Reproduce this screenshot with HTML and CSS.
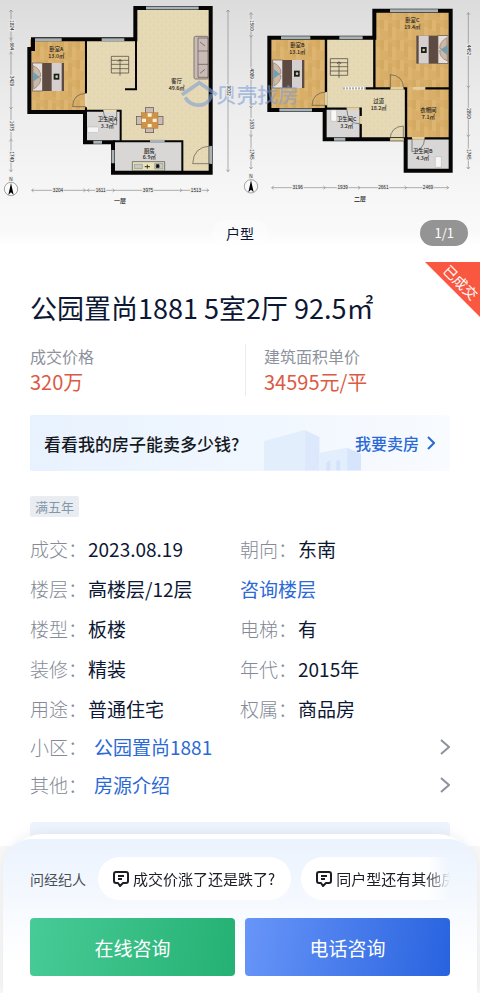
FILE: index.html
```html
<!DOCTYPE html>
<html lang="zh-CN">

<head>
    <meta charset="UTF-8">
    <meta name="viewport" content="width=device-width, initial-scale=1.0">
    <title>公园置尚1881</title>
    <link rel="stylesheet" href="styles.css">
</head>

<body>
    <header class="gallery">
        <svg class="floor-plan" viewBox="0 0 1440 630" role="img" aria-label="户型图">
            <defs>
                <pattern id="wood" width="48" height="60" patternUnits="userSpaceOnUse">
                    <rect width="48" height="60" fill="#d8ae68" />
                    <path d="M0 0h12v34H0zM24 20h12v40H24z" fill="#ddb571" />
                    <path d="M12 10h12v40H12zM36 0h12v26H36z" fill="#d4a961" />
                </pattern>
                <pattern id="stone" width="24" height="24" patternUnits="userSpaceOnUse">
                    <rect width="24" height="24" fill="#e6d9b5" />
                    <path d="M2 8l6-5M14 20l7-4M15 6l4 4M4 18l4 3" stroke="#dccb9f" stroke-width="2" />
                </pattern>
                <g id="bed">
                    <rect width="95" height="84" fill="#5d4b42" />
                    <rect width="30" height="84" fill="#e6dfdb" stroke="#6b5b52" stroke-width="2" />
                    <path d="M2 8q24 10 23 32q-10 4-23 2zM2 44q14-4 23 2q0 20-21 32z" fill="#cdb8a5" stroke="#8b776a" stroke-width="2" />
                    <path d="M3 26l18 16-18 14z" fill="#6f9fb4" />
                    <rect x="58" width="30" height="84" fill="#d5d0cf" />
                    <rect x="64" y="32" width="17" height="18" fill="#1d1f18" />
                    <circle cx="73" cy="41" r="4" fill="#c6cf96" />
                </g>
                <g id="stairs" fill="none" stroke="#3c3a35" stroke-width="2">
                    <path d="M0 0h52v50H0zM0 12h52M0 24h52M0 37h52M26 58V10M20 16l6-7 6 7" />
                </g>
                <g id="compass">
                    <circle r="20" fill="#fafafa" stroke="#777" stroke-width="2" />
                    <path d="M0-18L8 18 0 10-8 18z" fill="#000" />
                    <text class="plan-dim" y="-25">N</text>
                </g>
            </defs>

            <!-- first floor -->
            <path d="M90 118h168v214H90z" fill="url(#wood)" />
            <path d="M260 118h148V25h223v493H549V424H362V332H260z" fill="url(#stone)" />
            <path d="M258 335h102v90H258zM343 424h203v96H343z" fill="#d8d7d6" />
            <path d="M406 24H632V518H339V427H255V336H88V147H99V118H406z" fill="none" stroke="#050505" stroke-width="12" />
            <path d="M258 118V332H362V424M408 112V268H375M340 424H547V518" fill="none" stroke="#050505" stroke-width="6" />
            <path d="M105 119h80M305 119h68M438 24h158M280 427h26M339 450v40M450 424h44M632 438v54" stroke="#a8b2b7" stroke-width="9" fill="none" />
            <path d="M258 280v42M310 333h40" stroke="#e8ddbd" stroke-width="7" />
            <path d="M258 280q-40 2-40 40h40M310 333q2 38 40 41v-41M632 438q-52 2-54 53h54" fill="none" stroke="#555" stroke-width="2" />
            <use href="#bed" x="97" y="189" />
            <use href="#stairs" x="334" y="169" />
            <rect x="262" y="381" width="34" height="17" fill="#f4f4f4" stroke="#999" />
            <g fill="#c9bcb7" stroke="#5d504c" stroke-width="2">
                <rect x="582" y="109" width="43" height="128" rx="5" />
                <path d="M594 114h30v118h-30zM594 153h30M594 193h30M600 126l15 12M600 220l15-12" />
                <rect x="436" y="323" width="25" height="18" />
                <rect x="436" y="380" width="25" height="18" />
                <rect x="409" y="349" width="18" height="25" />
                <rect x="470" y="349" width="19" height="25" />
            </g>
            <rect x="424" y="338" width="50" height="47" fill="#cf9348" stroke="#8d6430" />
            <path d="M426 356h12v10h-12zM458 356h12v10h-12zM443 340h12v10h-12zM443 372h12v10h-12z" fill="#fff1d8" />
            <path d="M397 485h97v27h-97z" fill="#ebe3b9" stroke="#444" stroke-width="2" />
            <path d="M403 493h24v13h-24zM464 490h25v17h-25z" fill="#c5c9c8" stroke="#555" />
            <path d="M434 500h16M442 494v12M469 494h8v9h-8z" stroke="#333" stroke-width="3" />
            <path class="plan-rule" d="M33 30V515M684 30V515M95 571H626M28 36l5-6 5 6M28 509l5 6 5-6M679 36l5-6 5 6M679 509l5 6 5-6M101 566l-6 5 6 5M620 566l6 5-6 5M28 113l5 6 5-6M28 163l5-6 5 6M28 321l5 6 5-6M28 424l5-6 5 6M250 566l6 5-6 5M268 566l-6 5 6 5M338 566l6 5-6 5M540 566l6 5-6 5" />

            <!-- second floor -->
            <path d="M810 115h166v210H810zM1125 35h225v230h-225zM1218 265h132v150h-132z" fill="url(#wood)" />
            <path d="M980 115h142v150h94v148H1080v-88H980z" fill="url(#stone)" />
            <path d="M980 328h100v90H980zM1218 415h132v95h-132z" fill="#d8d7d6" />
            <path d="M1216 418H974V330H808V113H1123V32H1352V512H1217V412" fill="none" stroke="#050505" stroke-width="12" />
            <path d="M978 113V326H1082V418M1123 113V265H1215M1096 265H1123M1274 265H1352M1218 262V415H1352" fill="none" stroke="#050505" stroke-width="7" />
            <path d="M843 113h88M1018 113h70M1170 32h144M838 330h98M1002 418h34" stroke="#a8b2b7" stroke-width="9" fill="none" />
            <path d="M978 276v40M1040 326h38M1082 348v24M1171 265h40M1170 418h42M1236 415h38M1238 265h38" stroke="#e2d0a0" stroke-width="8" />
            <path d="M978 276q-40 2-42 40h42M1171 265v-41q38 2 40 41M1210 418v-40q-38 2-40 40M1236 415v40q36-2 38-40M1040 326q2 46 42 46" fill="none" stroke="#555" stroke-width="2" />
            <path d="M1030 265h66" stroke="#fff" stroke-width="9" />
            <path d="M1030 265h66" stroke="#888" stroke-width="7" stroke-dasharray="4 5" />
            <use href="#bed" x="818" y="180" />
            <use href="#bed" transform="translate(1344 191) rotate(180)" />
            <use href="#stairs" x="991" y="176" />
            <path d="M993 330h17v34h-17zM1306 470h18v32h-18z" fill="#f7f7f7" stroke="#999" />
            <path class="plan-rule" d="M753 38V507M1405 38V507M815 563H1346M748 44l5-6 5 6M748 501l5 6 5-6M1400 44l5-6 5 6M1400 501l5 6 5-6M821 558l-6 5 6 5M1340 558l6 5-6 5M748 106l5 6 5-6M748 318l5 6 5-6M748 404l5 6 5-6M1400 257l5 6 5-6M1400 404l5 6 5-6M970 558l6 5-6 5M1074 558l6 5-6 5M1214 558l6 5-6 5" />

            <!-- watermark -->
            <g class="watermark">
                <path d="M546 284L598 248L650 284M556 292a44 38 0 0 0 58 20M634 282a44 38 0 0 1-20 30" />
                <text x="648" y="308">贝壳找房</text>
            </g>

            <!-- room names and areas -->
            <text class="plan-room" x="169" y="154">卧室A<tspan x="169" dy="20">13.0㎡</tspan></text>
            <text class="plan-room" x="530" y="249">客厅<tspan x="530" dy="20">49.6㎡</tspan></text>
            <text class="plan-room" x="322" y="364">卫生间A<tspan x="322" dy="20">3.3㎡</tspan></text>
            <text class="plan-room" x="448" y="458">厨房<tspan x="448" dy="20">6.9㎡</tspan></text>
            <text class="plan-room" x="892" y="141">卧室B<tspan x="892" dy="20">13.1㎡</tspan></text>
            <text class="plan-room" x="1237" y="67">卧室C<tspan x="1237" dy="20">19.4㎡</tspan></text>
            <text class="plan-room" x="1136" y="309">过道<tspan x="1136" dy="20">18.2㎡</tspan></text>
            <text class="plan-room" x="1285" y="337">衣帽间<tspan x="1285" dy="20">7.1㎡</tspan></text>
            <text class="plan-room" x="1040" y="364">卫生间C<tspan x="1040" dy="20">3.2㎡</tspan></text>
            <text class="plan-room" x="1268" y="459">卫生间B<tspan x="1268" dy="20">4.3㎡</tspan></text>

            <!-- dimensions -->
            <text class="plan-dim" x="174" y="576">3204</text>
            <text class="plan-dim" x="302" y="576">1611</text>
            <text class="plan-dim" x="444" y="576">3975</text>
            <text class="plan-dim" x="588" y="576">1513</text>
            <text class="plan-dim" transform="translate(29 76) rotate(90)">1824</text>
            <text class="plan-dim" transform="translate(29 139) rotate(90)">664</text>
            <text class="plan-dim" transform="translate(29 243) rotate(90)">3429</text>
            <text class="plan-dim" transform="translate(29 378) rotate(90)">1675</text>
            <text class="plan-dim" transform="translate(29 470) rotate(90)">1740</text>
            <text class="plan-dim" transform="translate(680 272) rotate(90)">9032</text>
            <text class="plan-dim" x="893" y="568">3196</text>
            <text class="plan-dim" x="1028" y="568">1939</text>
            <text class="plan-dim" x="1150" y="568">2661</text>
            <text class="plan-dim" x="1284" y="568">2469</text>
            <text class="plan-dim" transform="translate(749 76) rotate(90)">1560</text>
            <text class="plan-dim" transform="translate(749 221) rotate(90)">4089</text>
            <text class="plan-dim" transform="translate(749 372) rotate(90)">1633</text>
            <text class="plan-dim" transform="translate(749 463) rotate(90)">1745</text>
            <text class="plan-dim" transform="translate(1401 150) rotate(90)">4452</text>
            <text class="plan-dim" transform="translate(1401 340) rotate(90)">2890</text>
            <text class="plan-dim" transform="translate(1401 463) rotate(90)">1745</text>
            <use href="#compass" x="33" y="567" />
            <use href="#compass" x="753" y="559" />
            <text class="plan-floor" x="360" y="610">一层</text>
            <text class="plan-floor" x="1080" y="604">二层</text>
        </svg>
        <div class="gallery-footer">
            <span class="gallery-tab">户型</span>
            <span class="gallery-count">1/1</span>
        </div>
    </header>

    <main class="house">
        <div class="sold-corner"><span class="sold-text">已成交</span></div>
        <h1 class="title">公园置尚1881 5室2厅 92.5㎡</h1>

        <dl class="prices">
            <div class="price">
                <dt>成交价格</dt>
                <dd>320万</dd>
            </div>
            <div class="price">
                <dt>建筑面积单价</dt>
                <dd>34595元/平</dd>
            </div>
        </dl>

        <a class="sell-banner" href="#">
            <svg class="sell-art" viewBox="0 0 100 42" aria-hidden="true">
                <path d="M0 12L41 1V42H0z" fill="#e3eefd" />
                <path d="M41 1L56 8V42H41z" fill="#dce9fc" />
                <path d="M56 24L84 19V42H56z" fill="#e3eefd" />
                <path d="M84 19L98 25V42H84z" fill="#d6e5fc" />
                <path d="M63 34l4-3v11h-4zM73 32l4-1v11h-4z" fill="#d3e3fb" />
            </svg>
            <span class="sell-question">看看我的房子能卖多少钱?</span>
            <span class="sell-action">我要卖房
                <svg class="sell-arrow" viewBox="0 0 8 14" aria-hidden="true"><path d="M1 1l6 6-6 6" /></svg>
            </span>
        </a>

        <span class="tag">满五年</span>

        <dl class="facts">
            <div class="fact"><dt>成交：</dt><dd>2023.08.19</dd></div>
            <div class="fact"><dt>朝向：</dt><dd>东南</dd></div>
            <div class="fact"><dt>楼层：</dt><dd>高楼层/12层</dd></div>
            <div class="fact"><dd><a href="#">咨询楼层</a></dd></div>
            <div class="fact"><dt>楼型：</dt><dd>板楼</dd></div>
            <div class="fact"><dt>电梯：</dt><dd>有</dd></div>
            <div class="fact"><dt>装修：</dt><dd>精装</dd></div>
            <div class="fact"><dt>年代：</dt><dd>2015年</dd></div>
            <div class="fact"><dt>用途：</dt><dd>普通住宅</dd></div>
            <div class="fact"><dt>权属：</dt><dd>商品房</dd></div>
        </dl>
        <a class="more-row" href="#">
            <span class="more-label">小区：</span>
            <span class="more-value">公园置尚1881</span>
            <svg class="more-arrow" viewBox="0 0 10 16" aria-hidden="true"><path d="M1 1l8 7-8 7" /></svg>
        </a>
        <a class="more-row" href="#">
            <span class="more-label">其他：</span>
            <span class="more-value">房源介绍</span>
            <svg class="more-arrow" viewBox="0 0 10 16" aria-hidden="true"><path d="M1 1l8 7-8 7" /></svg>
        </a>
        <div class="next-card"></div>
    </main>

    <footer class="contact-bar">
        <div class="contact-inner">
            <div class="questions">
                <span class="questions-label">问经纪人</span>
                <div class="question-list">
                    <button class="question" type="button">
                        <svg class="question-icon" viewBox="0 0 16 16" aria-hidden="true"><path d="M3 1h10q2 0 2 2v7q0 2-2 2h-3l-3 3-2-3H3q-2 0-2-2V3q0-2 2-2zM5 5h6M5 8h4" /></svg>
                        成交价涨了还是跌了?
                    </button>
                    <button class="question" type="button">
                        <svg class="question-icon" viewBox="0 0 16 16" aria-hidden="true"><path d="M3 1h10q2 0 2 2v7q0 2-2 2h-3l-3 3-2-3H3q-2 0-2-2V3q0-2 2-2zM5 5h6M5 8h4" /></svg>
                        同户型还有其他房
                    </button>
                </div>
            </div>
            <div class="actions">
                <button class="action action-chat" type="button">在线咨询</button>
                <button class="action action-call" type="button">电话咨询</button>
            </div>
        </div>
    </footer>
</body>

</html>
```

FILE: styles.css
```css
* {
    box-sizing: border-box;
}

body {
    font-family: "Noto Sans CJK SC", sans-serif;
    margin: 0;
    background-color: #f7f7f7;
    color: #0d1733;
}

a {
    color: #2b69d6;
    text-decoration: none;
}

dl,
dd {
    margin: 0;
}

button {
    border: none;
    font-family: inherit;
    cursor: pointer;
}

/* Gallery */
.gallery {
    background: linear-gradient(#dcdcdc, #eeeeee 45%, #f8f8f8 80%, #f9f9f9 88%, #ffffff 94%);
}

.floor-plan {
    display: block;
    width: 100%;
}

.plan-room,
.plan-dim,
.plan-floor {
    font-size: 16px;
    font-weight: 500;
    text-anchor: middle;
    fill: #222222;
}

.plan-dim {
    font-family: "Liberation Sans", sans-serif;
    font-size: 14px;
    stroke: #eeeeee;
    stroke-width: 6px;
    paint-order: stroke;
}

.plan-floor {
    font-size: 18px;
}

.plan-rule {
    fill: none;
    stroke: #888888;
    stroke-width: 2;
}

.watermark {
    fill: none;
    stroke: #7fa0d8;
    stroke-width: 11;
    opacity: 0.6;
}

.watermark text {
    font-size: 62px;
    font-weight: 500;
    fill: #7fa0d8;
    stroke: none;
}

.gallery-footer {
    display: grid;
    grid-template-columns: 1fr auto 1fr;
    align-items: center;
    height: 52px;
    padding: 0 12px 6px;
}

.gallery-tab {
    grid-column: 2;
    padding: 2px 14px;
    border-radius: 14px;
    background-color: rgba(255, 255, 255, 0.4);
    font-size: 14px;
    line-height: 22px;
}

.gallery-count {
    justify-self: end;
    padding: 0 14px;
    border-radius: 14px;
    background-color: #949494;
    color: #ffffff;
    font-size: 13px;
    line-height: 26px;
}

/* House details */
.house {
    position: relative;
    padding: 25px 30px 0;
    background-color: #ffffff;
}

.sold-corner {
    position: absolute;
    top: 0;
    right: 0;
    width: 55px;
    height: 55px;
    overflow: hidden;
    background-color: #fa5741;
    clip-path: polygon(0 0, 100% 0, 100% 100%);
}

.sold-text {
    position: absolute;
    top: 10px;
    right: -11px;
    width: 60px;
    color: #ffffff;
    font-size: 14px;
    line-height: 20px;
    text-align: center;
    transform: rotate(45deg);
}

.title {
    margin: 0 0 15px;
    font-size: 27px;
    font-weight: 400;
    line-height: 42px;
}

.prices {
    display: grid;
    grid-template-columns: 215px 1fr;
    margin-bottom: 19px;
}

.price + .price {
    padding-left: 18px;
    border-left: 1px solid #ececef;
}

.price dt {
    color: #8d929c;
    font-size: 16px;
    line-height: 24px;
}

.price dd {
    color: #dc5a44;
    font-size: 20px;
    line-height: 28px;
}

.sell-banner {
    position: relative;
    display: flex;
    align-items: center;
    justify-content: space-between;
    height: 56px;
    margin-bottom: 25px;
    padding: 0 15px 0 14px;
    border-radius: 2px;
    background: linear-gradient(90deg, #e8f2fe, #f8fbff);
}

.sell-art {
    position: absolute;
    right: 87px;
    bottom: 0;
    width: 99px;
}

.sell-question {
    position: relative;
    color: #151820;
    font-size: 17px;
    font-weight: 500;
}

.sell-action {
    position: relative;
    display: flex;
    align-items: center;
    gap: 8px;
    font-size: 16px;
    font-weight: 500;
}

.sell-arrow {
    width: 8px;
    fill: none;
    stroke: #2b69d6;
    stroke-width: 2;
}

.tag {
    display: block;
    width: max-content;
    margin-bottom: 18px;
    padding: 0 5px;
    border-radius: 2px;
    background-color: #e9edf1;
    color: #8497aa;
    font-size: 13px;
    line-height: 21px;
}

.facts {
    display: grid;
    grid-template-columns: 1fr 1fr;
    row-gap: 12px;
    margin-bottom: 5px;
}

.fact,
.more-row {
    display: flex;
    font-size: 19px;
    line-height: 28px;
}

.fact dt,
.more-label {
    width: 58px;
    color: #858a96;
    font-weight: 300;
}

.more-row {
    align-items: center;
    line-height: 38px;
}

.more-value {
    flex: 1;
    padding-left: 6px;
}

.more-arrow {
    width: 10px;
    fill: none;
    stroke: #8d929c;
    stroke-width: 2;
}

.next-card {
    height: 24px;
    margin-top: 18px;
    border-radius: 4px 4px 0 0;
    background-color: #eef4fe;
}

/* Contact bar */
.contact-bar {
    position: fixed;
    right: 3px;
    bottom: 0;
    left: 3px;
    padding-top: 5px;
    border-radius: 40px 40px 0 0;
    background-color: #ffffff;
    box-shadow: 0 -2px 12px rgba(0, 0, 0, 0.06);
}

.contact-inner {
    padding: 18px 27px 17px;
    border-radius: 28px 28px 0 0;
    background: linear-gradient(#ebf3fe, #ffffff 80%);
}

.questions {
    display: flex;
    align-items: center;
    margin-bottom: 18px;
}

.questions-label {
    flex: none;
    width: 68px;
    color: #4a4e57;
    font-size: 14px;
}

.question-list {
    display: flex;
    flex: 1;
    gap: 10px;
    overflow: hidden;
    mask-image: linear-gradient(90deg, #000000 93%, transparent);
}

.question {
    display: flex;
    flex: none;
    align-items: center;
    gap: 4px;
    height: 43px;
    padding: 0 16px 0 15px;
    border-radius: 22px;
    background-color: #ffffff;
    color: #1c1e24;
    font-size: 15px;
}

.question-icon {
    width: 16px;
    fill: none;
    stroke: #1c1e24;
    stroke-width: 2;
    stroke-linejoin: round;
}

.actions {
    display: grid;
    grid-template-columns: 1fr 1fr;
    gap: 10px;
}

.action {
    height: 58px;
    border-radius: 4px;
    color: #ffffff;
    font-size: 19px;
}

.action-chat {
    background: linear-gradient(100deg, #48cb97, #25b173);
}

.action-call {
    background: linear-gradient(100deg, #6895f8, #2863df);
}
```
